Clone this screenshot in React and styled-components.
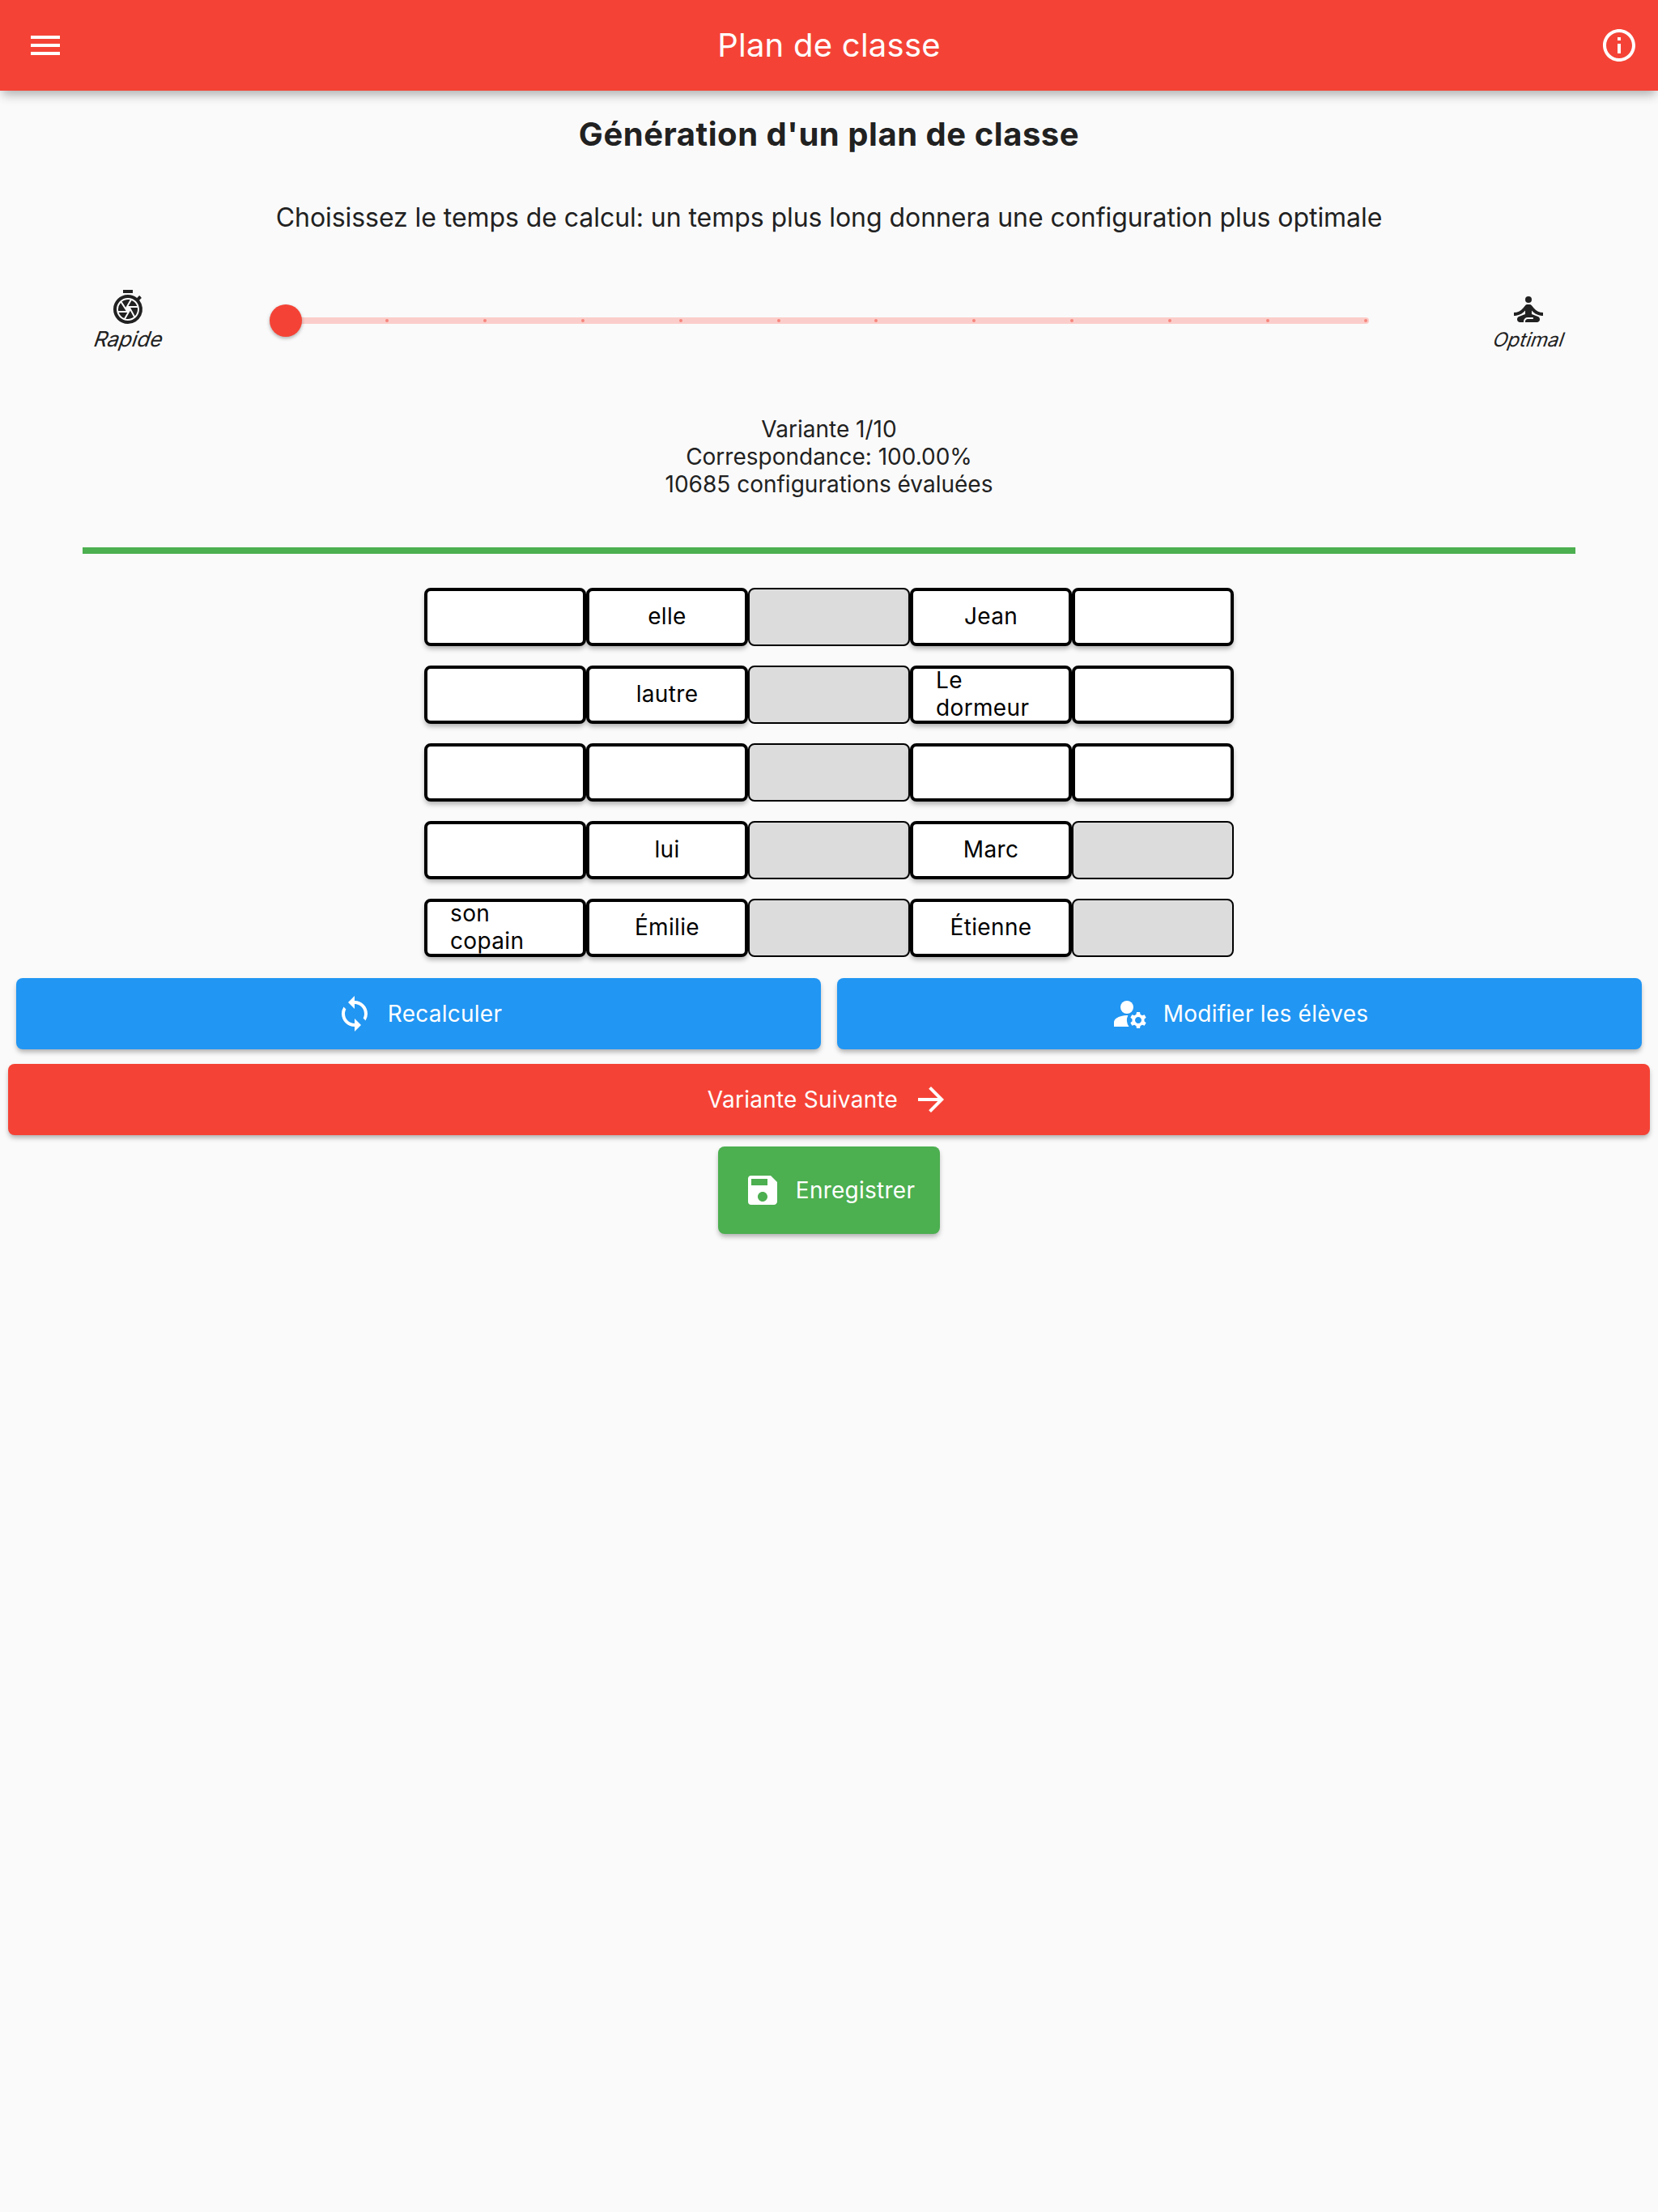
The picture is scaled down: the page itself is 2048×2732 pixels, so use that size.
import React from "react";
import styled, { createGlobalStyle } from "styled-components";
import {
  MdMenu,
  MdInfoOutline,
  MdShutterSpeed,
  MdSelfImprovement,
  MdSync,
  MdManageAccounts,
  MdArrowForward,
  MdSave,
} from "react-icons/md";

const RAISED = "0 4px 6px -1px rgba(0, 0, 0, 0.32)";

const GlobalStyle = createGlobalStyle`
  *, *::before, *::after { box-sizing: border-box; }
  body {
    margin: 0;
    background: #fafafa;
    color: #212121;
    font-family: Inter, Roboto, "Liberation Sans", sans-serif;
    font-size: 28px;
    font-weight: 400;
  }
  button { font-family: inherit; border: 0; margin: 0; }
`;

const Page = styled.div`
  display: flex;
  flex-direction: column;
  min-height: 2732px;
  background: #fafafa;
  overflow: hidden;
`;

const AppBar = styled.header`
  display: grid;
  grid-template-columns: 112px 1fr 112px;
  align-items: center;
  height: 112px;
  background: #f44336;
  color: #fff;
  box-shadow: 0 8px 12px -3px rgba(0, 0, 0, 0.3);
`;

const IconButton = styled.button`
  display: flex;
  justify-content: ${(p) => (p.$end ? "flex-end" : "flex-start")};
  padding: 0 ${(p) => (p.$end ? "24px 0 0" : "0 0 32px")};
  background: none;
  color: inherit;
`;

const BarTitle = styled.h1`
  margin: 0;
  text-align: center;
  font-size: 40px;
  font-weight: 400;
  line-height: 48px;
  letter-spacing: 0.25px;
`;

const Heading = styled.h2`
  margin: 30px 0 0;
  text-align: center;
  font-size: 40px;
  font-weight: 700;
  line-height: 48px;
  letter-spacing: 0.53px;
`;

const Lead = styled.p`
  margin: 59px 0 0;
  text-align: center;
  font-size: 32px;
  line-height: 40px;
  letter-spacing: -0.06px;
`;

const SpeedRow = styled.div`
  display: grid;
  grid-template-columns: 316px 1fr 320px;
  align-items: center;
  height: 136px;
  margin-top: 39px;
`;

const SpeedEnd = styled.div`
  display: flex;
  flex-direction: column;
  align-items: center;
  padding-bottom: ${(p) => p.$bottom}px;
  font-size: ${(p) => p.$size}px;
  line-height: ${(p) => p.$line}px;
`;

const Slanted = styled.span`
  margin-left: 2px;
  transform: skewX(-19deg);
`;

const Track = styled.div`
  display: flex;
  align-items: center;
  justify-content: space-between;
  height: 8px;
  margin: 0 37px;
  padding: 0 2px;
  border-radius: 4px;
  background: #fbcdca;
`;

const Tick = styled.span`
  width: 4px;
  height: 4px;
  border-radius: 50%;
  background: #f6867e;
`;

const Thumb = styled.span`
  flex: none;
  width: 40px;
  height: 40px;
  margin: 0 -14px 0 -22px;
  border-radius: 50%;
  background: #f44336;
  box-shadow: 0 2px 4px rgba(0, 0, 0, 0.3);
`;

const Stats = styled.div`
  margin-top: 49px;
  text-align: center;
  line-height: 34px;
  letter-spacing: 0;
`;

const Progress = styled.div`
  height: 8px;
  margin: 61px 5% 0;
  background: #4caf50;
`;

const Seats = styled.div`
  display: grid;
  grid-template-columns: repeat(5, 200px);
  grid-auto-rows: 72px;
  row-gap: 24px;
  justify-content: center;
  margin-top: 42px;
`;

const Seat = styled.div`
  display: flex;
  align-items: center;
  justify-content: center;
  padding: 0 28px 2px;
  border: ${(p) => (p.$closed ? 2 : 4)}px solid #000;
  border-radius: 8px;
  background: ${(p) => (p.$closed ? "#dcdcdc" : "#fff")};
  color: #000;
  line-height: 34px;
  letter-spacing: 0.35px;
  box-shadow: ${(p) => (p.$closed ? "none" : RAISED)};
`;

const Name = styled.span`
  white-space: pre-line;
  flex: ${(p) => (p.$wide ? 1 : "none")};
`;

const Actions = styled.div`
  display: grid;
  grid-template-columns: 1fr 1fr;
  gap: 20px;
  margin: 26px 20px 0;
`;

const Button = styled.button`
  display: flex;
  align-items: center;
  justify-content: center;
  gap: 17px;
  width: ${(p) => p.$width || "auto"};
  height: ${(p) => p.$height || "88px"};
  margin: ${(p) => p.$margin || 0};
  padding: 0;
  border-radius: 8px;
  background: ${(p) => p.$color};
  color: #fff;
  font-size: 28px;
  font-weight: 400;
  letter-spacing: 0.25px;
  box-shadow: ${RAISED};
`;

const Label = styled.span`
  padding-bottom: 1px;
`;

const CLOSED = null;
const rows = [
  ["", "elle", CLOSED, "Jean", ""],
  ["", "lautre", CLOSED, "Le\ndormeur", ""],
  ["", "", CLOSED, "", ""],
  ["", "lui", CLOSED, "Marc", CLOSED],
  ["son\ncopain", "Émilie", CLOSED, "Étienne", CLOSED],
];

export default function App() {
  return (
    <>
      <GlobalStyle />
      <Page>
        <AppBar>
          <IconButton aria-label="Menu">
            <MdMenu size={48} />
          </IconButton>
          <BarTitle>Plan de classe</BarTitle>
          <IconButton $end aria-label="Informations">
            <MdInfoOutline size={48} />
          </IconButton>
        </AppBar>
        <Heading>Génération d'un plan de classe</Heading>
        <Lead>Choisissez le temps de calcul: un temps plus long donnera une configuration plus optimale</Lead>
        <SpeedRow>
          <SpeedEnd $size={26} $line={30} $bottom={2}>
            <MdShutterSpeed size={48} />
            <Slanted>Rapide</Slanted>
          </SpeedEnd>
          <Track>
            <Thumb />
            {Array.from({ length: 11 }, (_, i) => (
              <Tick key={i} />
            ))}
          </Track>
          <SpeedEnd $size={24} $line={28} $bottom={0}>
            <MdSelfImprovement size={48} />
            <Slanted>Optimal</Slanted>
          </SpeedEnd>
        </SpeedRow>
        <Stats>
          <div>Variante 1/10</div>
          <div>Correspondance: 100.00%</div>
          <div>10685 configurations évaluées</div>
        </Stats>
        <Progress />
        <Seats>
          {rows.flat().map((name, i) => (
            <Seat key={i} $closed={name === CLOSED}>
              {name && <Name $wide={name.includes("\n")}>{name}</Name>}
            </Seat>
          ))}
        </Seats>
        <Actions>
          <Button $color="#2196f3">
            <MdSync size={48} />
            <Label>Recalculer</Label>
          </Button>
          <Button $color="#2196f3">
            <MdManageAccounts size={48} />
            <Label>Modifier les élèves</Label>
          </Button>
        </Actions>
        <Button $color="#f44336" $margin="18px 10px 0">
          <Label>Variante Suivante</Label>
          <MdArrowForward size={48} />
        </Button>
        <Button $color="#4caf50" $width="274px" $height="108px" $margin="14px auto 0">
          <MdSave size={48} />
          <Label>Enregistrer</Label>
        </Button>
      </Page>
    </>
  );
}
